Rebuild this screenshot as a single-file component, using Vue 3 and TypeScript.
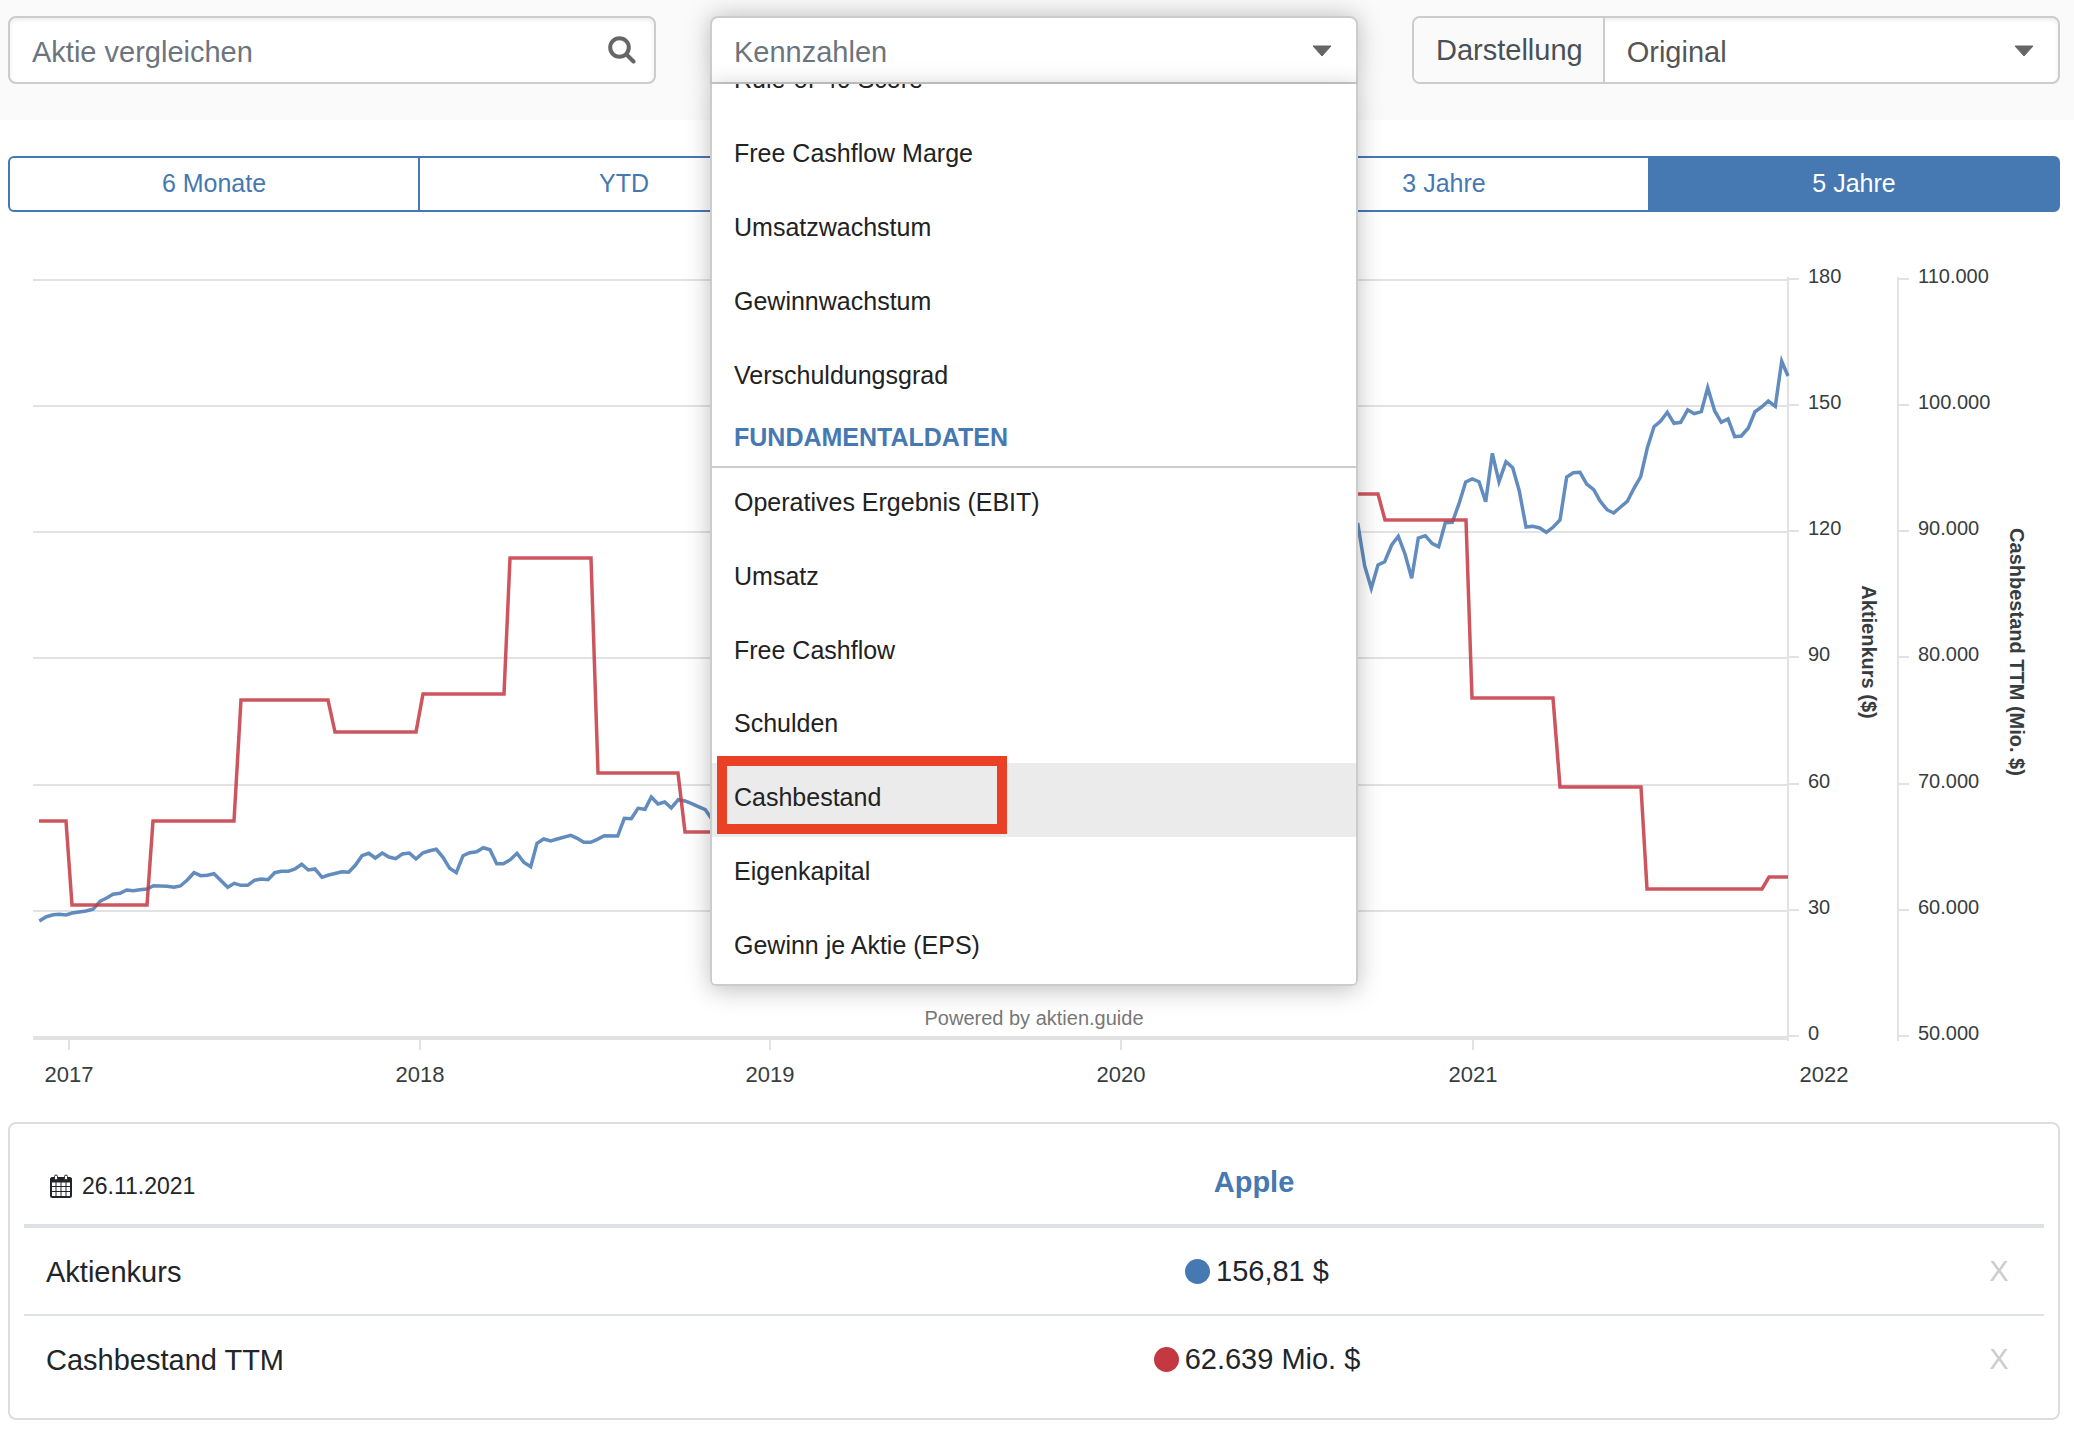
<script setup lang="ts">
import { onMounted, ref } from 'vue'

type Point = [number, number]

const periods = ['6 Monate', 'YTD', '1 Jahr', '3 Jahre', '5 Jahre']
const activePeriod = ref('5 Jahre')

const ratios = [
  'Rule-of-40 Score',
  'Free Cashflow Marge',
  'Umsatzwachstum',
  'Gewinnwachstum',
  'Verschuldungsgrad',
]
const fundamentals = [
  'Operatives Ergebnis (EBIT)',
  'Umsatz',
  'Free Cashflow',
  'Schulden',
  'Cashbestand',
  'Eigenkapital',
  'Gewinn je Aktie (EPS)',
]
const highlighted = 'Cashbestand'

const rows = [
  { name: 'Aktienkurs', value: '156,81 $', color: '#4678b2' },
  { name: 'Cashbestand TTM', value: '62.639 Mio. $', color: '#c43842' },
]

const menu = ref<HTMLElement | null>(null)
onMounted(() => {
  if (menu.value) menu.value.scrollTop = 40
})

const levels = [280, 406, 532, 658, 785, 911, 1037]
const priceTicks = ['180', '150', '120', '90', '60', '30', '0']
const cashTicks = ['110.000', '100.000', '90.000', '80.000', '70.000', '60.000', '50.000']
const years = [
  { label: '2017', x: 69 },
  { label: '2018', x: 420 },
  { label: '2019', x: 770 },
  { label: '2020', x: 1121 },
  { label: '2021', x: 1473 },
  { label: '2022', x: 1824 },
]

// Samples are kept at three steps per chart unit, relative to the origin of their section.
function section(points: Point[], left: number, top: number): string {
  return points.map(([x, y]) => `${(left + x / 3).toFixed(1)},${(top + y / 3).toFixed(1)}`).join(' ')
}

const priceStart: Point[] = [
  [118, 1203], [139, 1190], [160, 1184], [178, 1183], [198, 1185], [217, 1179], [258, 1173], [279, 1168],
  [300, 1144], [320, 1134], [339, 1123], [360, 1120], [380, 1110], [400, 1112], [420, 1109], [440, 1107],
  [461, 1097], [501, 1099], [522, 1102], [541, 1098], [562, 1080], [582, 1058], [602, 1067], [622, 1066],
  [642, 1061], [683, 1102], [703, 1090], [722, 1096], [743, 1096], [763, 1081], [784, 1077], [804, 1079],
  [824, 1058], [844, 1054], [865, 1054], [885, 1047], [905, 1033], [925, 1050], [945, 1047], [966, 1072],
  [986, 1065], [1026, 1055], [1046, 1057], [1066, 1036], [1086, 1007], [1106, 1000],
]
const priceMiddle: Point[] = [
  [16, 1014], [37, 999], [57, 1011], [77, 1016], [97, 1002], [118, 999], [138, 1017], [159, 998],
  [179, 992], [199, 988], [219, 1012], [239, 1045], [259, 1058], [279, 1007], [299, 998], [320, 995],
  [340, 983], [360, 989], [380, 1031], [400, 1031], [421, 1019], [441, 1000], [461, 1027], [482, 1040],
  [501, 970], [521, 957], [542, 963], [562, 957], [602, 946], [622, 955], [641, 967], [662, 967],
  [682, 958], [703, 947], [743, 948], [763, 895], [784, 896], [804, 865], [825, 868], [844, 831],
  [864, 852], [884, 846], [904, 864], [925, 839], [945, 843], [965, 851], [985, 860], [1006, 869],
  [1026, 898],
]
const priceEnd: Point[] = [
  [54, 585], [74, 708], [94, 775], [114, 705], [134, 695], [155, 645], [175, 619], [195, 672],
  [215, 745], [235, 624], [256, 617], [276, 640], [296, 650], [316, 578], [337, 577], [357, 521],
  [377, 456], [397, 447], [417, 455], [437, 515], [457, 370], [477, 455], [498, 395], [518, 413],
  [538, 483], [558, 591], [578, 589], [599, 594], [619, 607], [639, 592], [660, 570], [680, 441],
  [700, 428], [720, 427], [740, 462], [761, 479], [781, 514], [801, 539], [821, 549], [841, 532],
  [862, 514], [882, 475], [902, 440], [922, 354], [942, 290], [962, 273], [982, 247], [1002, 280],
  [1022, 277], [1043, 240], [1063, 251], [1084, 245], [1103, 173], [1124, 243], [1144, 277], [1164, 267],
  [1184, 320], [1204, 318], [1225, 294], [1245, 245], [1265, 231], [1285, 213], [1306, 229], [1325, 94],
  [1344, 138],
]
const pricePoints = [
  section(priceStart, 0, 520),
  section(priceMiddle, 370, 520),
  section(priceEnd, 1340, 330),
].join(' ')

const cashLevels: [number, number, number][] = [
  [39, 66, 821], [72, 147, 905], [153, 234, 821], [241, 328, 700], [335, 416, 732],
  [423, 504, 694], [510, 591, 558], [598, 678, 773], [685, 766, 832], [1300, 1378, 494],
  [1385, 1466, 520], [1472, 1553, 698], [1560, 1641, 787], [1647, 1762, 889], [1769, 1788, 877],
]
const cashPoints = cashLevels.map(([from, to, y]) => `${from},${y} ${to},${y}`).join(' ')
</script>

<template>
  <main class="page">
    <header class="toolbar">
      <div class="control">
        <input class="field" type="text" placeholder="Aktie vergleichen" aria-label="Aktie vergleichen" />
        <svg class="search" viewBox="0 0 28 28" aria-hidden="true">
          <circle cx="11.500" cy="11.500" r="9.300" />
          <path d="M18.500 18.500 25.500 25.500" />
        </svg>
      </div>

      <div class="picker">
        <div class="control open">
          <input
            class="field"
            type="text"
            role="combobox"
            aria-expanded="true"
            aria-controls="metrics"
            placeholder="Kennzahlen"
            aria-label="Kennzahlen"
          />
          <svg class="caret" viewBox="0 0 20 12" aria-hidden="true"><path d="M1 1H19L10 11Z" /></svg>
        </div>
        <div id="metrics" ref="menu" class="menu" role="listbox" aria-label="Kennzahlen">
          <ul class="group">
            <li v-for="item in ratios" :key="item" class="option" role="option">{{ item }}</li>
          </ul>
          <h2 class="group-title">FUNDAMENTALDATEN</h2>
          <ul class="group fundamentals">
            <li
              v-for="item in fundamentals"
              :key="item"
              class="option"
              :class="{ highlighted: item === highlighted }"
              role="option"
            >
              {{ item }}
              <span v-if="item === highlighted" class="marker"></span>
            </li>
          </ul>
        </div>
      </div>

      <div class="control">
        <label class="prefix" for="display-mode">Darstellung</label>
        <select id="display-mode" class="field">
          <option>Original</option>
          <option>Prozent</option>
        </select>
        <svg class="caret" viewBox="0 0 20 12" aria-hidden="true"><path d="M1 1H19L10 11Z" /></svg>
      </div>
    </header>

    <nav class="periods" aria-label="Zeitraum">
      <button
        v-for="period in periods"
        :key="period"
        type="button"
        class="period"
        :class="{ active: period === activePeriod }"
        @click="activePeriod = period"
      >
        {{ period }}
      </button>
    </nav>

    <svg class="chart" viewBox="8 230 2052 880" role="img" aria-label="Aktienkurs und Cashbestand TTM">
      <g class="grid">
        <line v-for="y in levels.slice(0, 6)" :key="y" x1="33" x2="1788" :y1="y" :y2="y" />
        <line class="base" x1="33" x2="1788" y1="1038" y2="1038" />
        <line v-for="year in years.slice(0, 5)" :key="year.label" :x1="year.x" :x2="year.x" y1="1040" y2="1050" />
        <line x1="1788" x2="1788" y1="277" y2="1041" />
        <line x1="1898" x2="1898" y1="277" y2="1041" />
        <template v-for="y in levels" :key="y">
          <line x1="1788" x2="1799" :y1="y - 1" :y2="y - 1" />
          <line x1="1898" x2="1909" :y1="y - 1" :y2="y - 1" />
        </template>
      </g>
      <polyline class="series price" :points="pricePoints" />
      <polyline class="series cash" :points="cashPoints" />
      <text class="credit" x="1034" y="1025" text-anchor="middle">Powered by aktien.guide</text>
      <g class="ticks">
        <text v-for="(tick, i) in priceTicks" :key="tick" x="1808" :y="levels[i] + 3">{{ tick }}</text>
        <text v-for="(tick, i) in cashTicks" :key="tick" x="1918" :y="levels[i] + 3">{{ tick }}</text>
      </g>
      <g class="years">
        <text v-for="year in years" :key="year.label" :x="year.x" y="1082" text-anchor="middle">{{ year.label }}</text>
      </g>
      <g class="titles">
        <text transform="translate(1862 652) rotate(90)" text-anchor="middle">Aktienkurs ($)</text>
        <text transform="translate(2010 652) rotate(90)" text-anchor="middle">Cashbestand TTM (Mio. $)</text>
      </g>
    </svg>

    <section class="card">
      <table class="values">
        <thead>
          <tr>
            <th class="date" scope="col">
              <span class="date-line">
                <svg class="calendar" viewBox="0 0 22 24" aria-hidden="true">
                  <path class="frame" d="M1 5.500a1.500 1.500 0 0 1 1.500-1.500h17a1.500 1.500 0 0 1 1.500 1.500v16a1.500 1.500 0 0 1-1.500 1.500h-17a1.500 1.500 0 0 1-1.500-1.500z" />
                  <path class="top" d="M1 4h20v4H1z" />
                  <path class="cells" d="M1 12.500h20M1 17.500h20M6 8v15M11 8v15M16 8v15" />
                  <rect class="ring" x="4.500" y="1" width="3" height="5" rx="1.500" />
                  <rect class="ring" x="14.500" y="1" width="3" height="5" rx="1.500" />
                </svg>
                26.11.2021
              </span>
            </th>
            <th class="stock" scope="col"><a href="#apple">Apple</a></th>
            <th class="remove"></th>
          </tr>
        </thead>
        <tbody>
          <tr v-for="row in rows" :key="row.name">
            <td class="name">{{ row.name }}</td>
            <td class="value">
              <span class="amount"><i class="dot" :style="{ background: row.color }"></i>{{ row.value }}</span>
            </td>
            <td class="remove"><button type="button" class="close" :aria-label="row.name + ' entfernen'">X</button></td>
          </tr>
        </tbody>
      </table>
    </section>
  </main>
</template>

<style>
body {
  margin: 0;
  background: #fff;
}
</style>

<style scoped>
* {
  box-sizing: border-box;
}
.page {
  font-family: "Liberation Sans", Arial, sans-serif;
  font-size: 29px;
  color: #212529;
}
.toolbar {
  display: grid;
  grid-template-columns: repeat(3, 1fr);
  gap: 54px;
  padding: 16px 14px 36px 8px;
  background: #fafafa;
}
.control {
  position: relative;
  display: flex;
  height: 68px;
  border: 2px solid #ccc;
  border-radius: 8px;
  background: #fff;
  box-shadow: inset 0 2px 4px rgba(0, 0, 0, 0.08);
}
.control.open {
  border-radius: 8px 8px 0 0;
  box-shadow: 0 0 24px rgba(0, 0, 0, 0.25);
}
.field {
  flex: 1;
  min-width: 0;
  padding: 4px 60px 0 22px;
  border: 0;
  outline: 0;
  background: transparent;
  font: inherit;
  color: #555;
  appearance: none;
}
.field::placeholder {
  color: #6c757d;
  opacity: 1;
}
.prefix {
  display: flex;
  align-items: center;
  padding: 0 20px 0 22px;
  border-right: 2px solid #ccc;
  border-radius: 6px 0 0 6px;
  background: #fafafa;
  color: #495057;
}
.search {
  position: absolute;
  top: 18px;
  right: 18px;
  width: 28px;
  height: 28px;
  fill: none;
  stroke: #666;
  stroke-width: 4;
  stroke-linecap: round;
}
.caret {
  position: absolute;
  top: 27px;
  right: 24px;
  width: 20px;
  height: 12px;
  fill: #666;
  stroke: #666;
  stroke-width: 1;
  stroke-linejoin: round;
  pointer-events: none;
}
.picker {
  position: relative;
}
.menu {
  position: absolute;
  z-index: 2;
  top: 100%;
  left: 0;
  right: 0;
  height: 902px;
  overflow-y: auto;
  scrollbar-width: none;
  border: 2px solid #ccc;
  border-top: 0;
  border-radius: 0 0 6px 6px;
  background: #fff;
  box-shadow: 0 4px 24px rgba(0, 0, 0, 0.25);
}
.group {
  display: grid;
  grid-auto-rows: 74px;
  margin: 0;
  padding: 0;
  list-style: none;
}
.group.fundamentals {
  height: 516px;
  grid-auto-rows: 1fr;
}
.option {
  position: relative;
  display: flex;
  align-items: center;
  padding: 0 22px 4px;
  font-size: 25px;
  color: #222;
}
.option.highlighted {
  background: #ebebeb;
}
.marker {
  position: absolute;
  top: -7px;
  left: 5px;
  width: 290px;
  height: 78px;
  border: 10px solid #ea4025;
  z-index: 1;
}
.group-title {
  display: flex;
  align-items: center;
  height: 54px;
  margin: 0;
  padding: 0 22px 6px;
  border-bottom: 2px solid #ccc;
  font-size: 25px;
  font-weight: bold;
  color: #4678b2;
}
.periods {
  display: flex;
  padding: 36px 14px 0 8px;
}
.period {
  flex: 1;
  height: 56px;
  padding: 0 0 2px;
  border: 2px solid #4678b2;
  background: #fff;
  font: inherit;
  font-size: 25px;
  color: #4678b2;
}
.period + .period {
  margin-left: -2px;
}
.period:first-child {
  border-radius: 6px 0 0 6px;
}
.period:last-child {
  border-radius: 0 6px 6px 0;
}
.period.active {
  background: #4678b2;
  color: #fff;
}
.chart {
  display: block;
  width: calc(100% - 22px);
  margin: 18px 14px 12px 8px;
  font-size: 20px;
}
.grid line {
  stroke: #e2e2e2;
  stroke-width: 2;
}
.grid .base {
  stroke-width: 4;
}
.series {
  fill: none;
  stroke-width: 3.5;
  stroke-opacity: 0.85;
}
.price {
  stroke: #4678b2;
}
.cash {
  stroke: #c43842;
}
.credit {
  fill: #777;
}
.ticks,
.years,
.titles {
  fill: #373d3f;
}
.years {
  font-size: 22px;
}
.titles {
  font-weight: bold;
}
.card {
  margin: 0 14px 12px 8px;
  padding: 14px;
  border: 2px solid #ddd;
  border-radius: 8px;
}
.values {
  width: 100%;
  table-layout: fixed;
  border-collapse: separate;
  border-spacing: 0;
}
.values th,
.values td {
  padding: 2px 0 0;
  text-align: center;
  vertical-align: middle;
}
.values th {
  height: 90px;
  border-bottom: 4px solid #dee2e6;
}
.values td {
  height: 88px;
  border-bottom: 2px solid #dee2e6;
}
.values tr:last-child td {
  border-bottom-color: transparent;
}
.values .date {
  width: 530px;
  padding: 10px 0 0 26px;
  font-size: 23px;
  font-weight: normal;
}
.date-line {
  display: flex;
  align-items: center;
  gap: 10px;
}
.calendar {
  width: 22px;
  height: 24px;
  fill: none;
  stroke: #212529;
}
.frame {
  stroke-width: 2;
}
.top {
  fill: #212529;
}
.ring {
  fill: #fff;
}
.values .name {
  padding-left: 22px;
  text-align: left;
}
.values .remove {
  width: 90px;
  padding-top: 0;
}
.stock a {
  color: #4678b2;
  text-decoration: none;
}
.values .value {
  padding: 4px 0 0 6px;
}
.amount {
  display: inline-flex;
  align-items: center;
  gap: 6px;
}
.dot {
  width: 25px;
  height: 25px;
  border-radius: 50%;
}
.close {
  padding: 0;
  border: 0;
  background: none;
  font: inherit;
  color: #ccc;
}
</style>
